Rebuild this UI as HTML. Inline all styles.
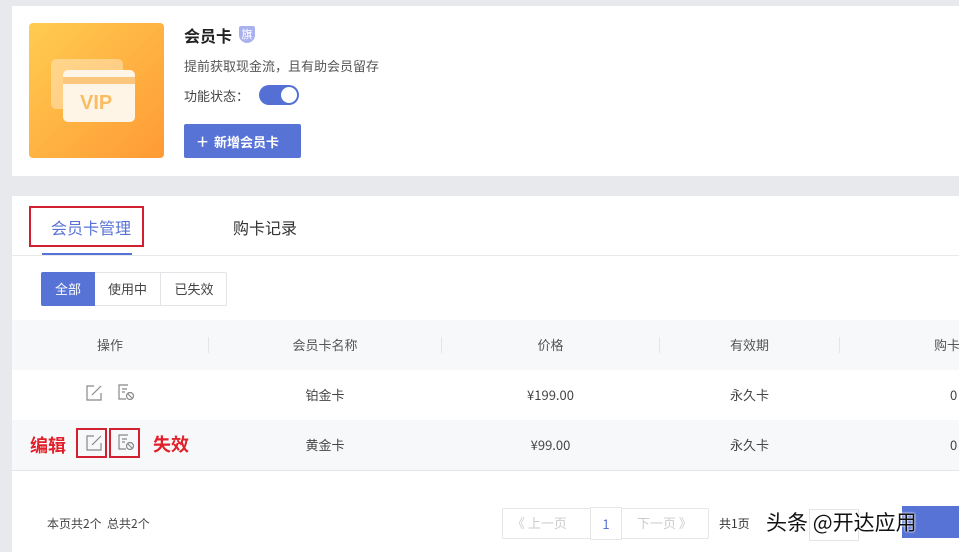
<!DOCTYPE html>
<html><head><meta charset="utf-8"><style>
*{margin:0;padding:0;box-sizing:border-box}
body{width:959px;height:552px;background:#e8e9ec;font-family:"Noto Sans CJK SC","Liberation Sans",sans-serif;position:relative;overflow:hidden;color:#333}
.a{position:absolute;white-space:nowrap}
.card{background:#fff}
.th{font-size:13px;color:#555;text-align:center;line-height:18px}
.div{width:1px;height:16px;background:#e3e5ea;top:337px}
.td{font-size:13px;color:#444;text-align:center;line-height:18px}
.red{color:#e0202a;font-weight:bold;font-size:18px;line-height:22px;text-shadow:0 0 2px #fff,1px 1px 0 #fff}
.box{border:2px solid #d32030}
</style></head><body>
<div class="a card" style="left:12px;top:6px;width:947px;height:170px"></div>
<div class="a" style="left:29px;top:23px;width:135px;height:135px;border-radius:4px;background:linear-gradient(135deg,#ffcc50,#ff9a35)"></div>
<div class="a" style="left:51px;top:59px;width:72px;height:50px;border-radius:5px;background:rgba(255,240,215,.45)"></div>
<div class="a" style="left:63px;top:70px;width:72px;height:52px;border-radius:5px;background:#fff5e6"></div>
<div class="a" style="left:63px;top:77px;width:72px;height:7px;background:#fcc77c"></div>
<div class="a" style="left:80px;top:91px;font-size:20px;font-weight:bold;color:#f8bd63;line-height:24px;font-family:'Liberation Sans',sans-serif">VIP</div>
<div class="a" style="left:184px;top:24px;font-size:16px;font-weight:bold;color:#222;line-height:22px">会员卡</div>
<div class="a" style="left:239px;top:26px;width:16px;height:17px;background:#aab2ee;border-radius:2px 2px 8px 8px;color:#fff;font-size:11px;text-align:center;line-height:16px">旗</div>
<div class="a" style="left:184px;top:57px;font-size:13px;color:#555;line-height:18px">提前获取现金流，且有助会员留存</div>
<div class="a" style="left:184px;top:87px;font-size:13px;color:#444;line-height:18px">功能状态：</div>
<div class="a" style="left:259px;top:85px;width:40px;height:20px;border-radius:10px;background:#5470d4"></div>
<div class="a" style="left:281px;top:87px;width:16px;height:16px;border-radius:50%;background:#fff"></div>
<div class="a" style="left:184px;top:124px;width:117px;height:34px;background:#5873d6;border-radius:2px;color:#fff;font-size:13px;font-weight:bold;line-height:34px;padding-left:13px"><span style="font-size:20px;font-weight:normal;vertical-align:-2px">+</span>&nbsp; 新增会员卡</div>

<div class="a card" style="left:12px;top:196px;width:947px;height:356px"></div>
<div class="a" style="left:12px;top:255px;width:947px;height:1px;background:#e8e9ec"></div>
<div class="a" style="left:42px;top:253px;width:90px;height:2px;background:#5873d6"></div>
<div class="a" style="left:51px;top:216px;font-size:16px;color:#5873d6;line-height:22px">会员卡管理</div>
<div class="a box" style="left:29px;top:206px;width:115px;height:41px"></div>
<div class="a" style="left:233px;top:216px;font-size:16px;color:#333;line-height:22px">购卡记录</div>
<div class="a" style="left:41px;top:272px;width:186px;height:34px;border:1px solid #e2e4e8;border-radius:2px"></div>
<div class="a" style="left:41px;top:272px;width:54px;height:34px;background:#5873d6;border-radius:2px 0 0 2px;color:#fff;font-size:13px;text-align:center;line-height:34px">全部</div>
<div class="a" style="left:160px;top:273px;width:1px;height:32px;background:#e2e4e8"></div>
<div class="a" style="left:95px;top:272px;width:65px;font-size:13px;text-align:center;line-height:34px;color:#444">使用中</div>
<div class="a" style="left:161px;top:272px;width:66px;font-size:13px;text-align:center;line-height:34px;color:#444">已失效</div>

<div class="a" style="left:12px;top:320px;width:947px;height:50px;background:#f7f8fa"></div>
<div class="a th" style="left:12px;top:336px;width:196px">操作</div>
<div class="a div" style="left:208px"></div>
<div class="a th" style="left:209px;top:336px;width:232px">会员卡名称</div>
<div class="a div" style="left:441px"></div>
<div class="a th" style="left:442px;top:336px;width:217px">价格</div>
<div class="a div" style="left:659px"></div>
<div class="a th" style="left:660px;top:336px;width:179px">有效期</div>
<div class="a div" style="left:839px"></div>
<div class="a th" style="left:934px;top:336px">购卡</div>

<div class="a" style="left:12px;top:420px;width:947px;height:50px;background:#f7f8fa"></div>
<div class="a" style="left:12px;top:470px;width:947px;height:1px;background:#e3e5ea"></div>

<svg class="a" style="left:85px;top:384px" width="18" height="18" viewBox="0 0 18 18" fill="none" stroke="#888" stroke-width="1.2"><path d="M9 2H2v14h14V9M7 11l9-9"/></svg>
<svg class="a" style="left:117px;top:383px" width="18" height="18" viewBox="0 0 18 18" fill="none" stroke="#888" stroke-width="1.2"><path d="M11 2H2v14h7M5 6h5M5 9h3"/><circle cx="13" cy="13" r="3.5"/><path d="M10.5 10.5l5 5"/></svg>
<svg class="a" style="left:85px;top:434px" width="18" height="18" viewBox="0 0 18 18" fill="none" stroke="#888" stroke-width="1.2"><path d="M9 2H2v14h14V9M7 11l9-9"/></svg>
<svg class="a" style="left:117px;top:433px" width="18" height="18" viewBox="0 0 18 18" fill="none" stroke="#888" stroke-width="1.2"><path d="M11 2H2v14h7M5 6h5M5 9h3"/><circle cx="13" cy="13" r="3.5"/><path d="M10.5 10.5l5 5"/></svg>
<div class="a box" style="left:76px;top:428px;width:31px;height:30px"></div>
<div class="a box" style="left:109px;top:428px;width:31px;height:30px"></div>
<div class="a red" style="left:30px;top:434px">编辑</div>
<div class="a red" style="left:153px;top:433px">失效</div>

<div class="a td" style="left:209px;top:386px;width:232px">铂金卡</div>
<div class="a td" style="left:442px;top:386px;width:217px">¥199.00</div>
<div class="a td" style="left:660px;top:386px;width:179px">永久卡</div>
<div class="a td" style="left:950px;top:386px">0</div>
<div class="a td" style="left:209px;top:436px;width:232px">黄金卡</div>
<div class="a td" style="left:442px;top:436px;width:217px">¥99.00</div>
<div class="a td" style="left:660px;top:436px;width:179px">永久卡</div>
<div class="a td" style="left:950px;top:436px">0</div>

<div class="a" style="left:47px;top:515px;font-size:12px;color:#444;line-height:17px">本页共2个&nbsp;&nbsp;总共2个</div>
<div class="a" style="left:502px;top:508px;width:207px;height:31px;border:1px solid #e5e6ea;border-radius:2px"></div>
<div class="a" style="left:590px;top:507px;width:32px;height:33px;border:1px solid #e5e6ea;background:#fff;color:#5873d6;font-size:13px;text-align:center;line-height:31px">1</div>
<div class="a" style="left:512px;top:514px;font-size:13px;color:#ccc;line-height:18px">《 上一页</div>
<div class="a" style="left:637px;top:514px;font-size:13px;color:#ccc;line-height:18px">下一页 》</div>
<div class="a" style="left:719px;top:515px;font-size:12px;color:#333;line-height:17px">共1页</div>
<div class="a" style="left:809px;top:509px;width:50px;height:32px;border:1px solid #e2e4e8"></div>
<div class="a" style="left:902px;top:506px;width:57px;height:32px;background:#5873d6"></div>
<div class="a" style="left:766px;top:508px;font-size:21px;color:#111;line-height:28px;text-shadow:0 0 2px #fff,0 0 2px #fff">头条 @开达应用</div>
</body></html>
